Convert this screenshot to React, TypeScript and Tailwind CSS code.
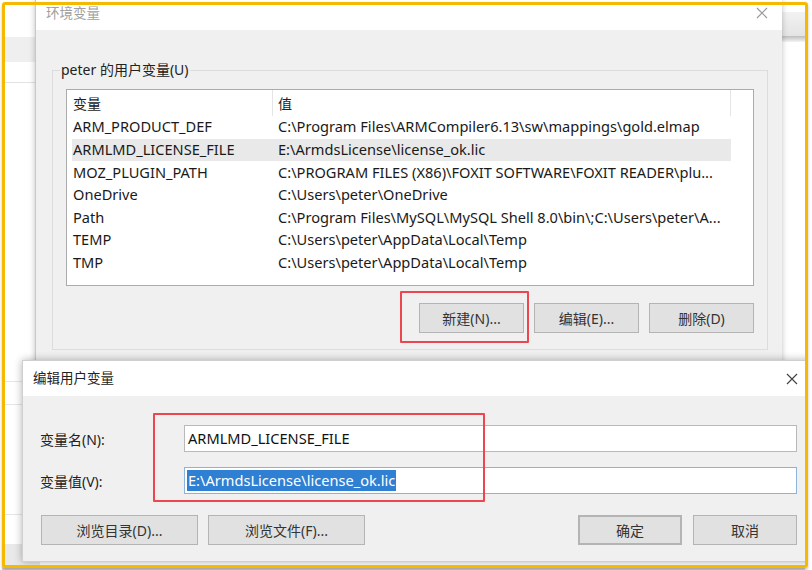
import React from "react";

const rows = [
  ["ARM_PRODUCT_DEF", "C:\\Program Files\\ARMCompiler6.13\\sw\\mappings\\gold.elmap"],
  ["ARMLMD_LICENSE_FILE", "E:\\ArmdsLicense\\license_ok.lic"],
  ["MOZ_PLUGIN_PATH", "C:\\PROGRAM FILES (X86)\\FOXIT SOFTWARE\\FOXIT READER\\plu..."],
  ["OneDrive", "C:\\Users\\peter\\OneDrive"],
  ["Path", "C:\\Program Files\\MySQL\\MySQL Shell 8.0\\bin\\;C:\\Users\\peter\\A..."],
  ["TEMP", "C:\\Users\\peter\\AppData\\Local\\Temp"],
  ["TMP", "C:\\Users\\peter\\AppData\\Local\\Temp"],
];

const font = { fontFamily: '"Noto Sans", "Noto Sans CJK SC", sans-serif' };

function CloseX({ color }: { color: string }) {
  return (
    <svg width="12" height="12" viewBox="0 0 12 12">
      <path d="M1 1L11 11M11 1L1 11" stroke={color} strokeWidth="1.2" fill="none" />
    </svg>
  );
}

function WinButton({ children, className = "" }: { children: React.ReactNode; className?: string }) {
  return (
    <div
      className={`h-[30px] flex items-center justify-center bg-[#e1e1e1] border border-[#b4b4b4] text-[14px] text-[#333] ${className}`}
    >
      {children}
    </div>
  );
}

function EnvWindow() {
  return (
    <div className="absolute left-[35px] top-0 w-[747px] h-[400px] bg-[#f0f0f0] border-l border-[#c8c8c8] shadow-[0_0_6px_rgba(0,0,0,0.25)] flex flex-col">
      <div className="h-[30px] bg-white flex items-center justify-between pl-[10px] pr-[14px] pb-[4px]">
        <span className="text-[13.5px] text-[#a0a0a0]">环境变量</span>
        <CloseX color="#9a9a9a" />
      </div>
      <div className="relative mt-[40px] ml-[16px] mr-[14px] h-[280px] border border-[#dcdcdc] pt-[18px] px-[13px]">
        <span className="absolute left-[7px] top-[-12px] bg-[#f0f0f0] px-[1px] text-[14px] text-[#222]">
          peter 的用户变量(U)
        </span>
        <div className="h-[197px] bg-white border border-[#ababab] flex flex-col">
          <div className="h-[26px] flex text-[14px] text-[#222] shrink-0">
            <div className="w-[206px] pl-[6px] flex items-center border-r border-[#e5e5e5]">变量</div>
            <div className="w-[458px] pl-[5px] flex items-center border-r border-[#e5e5e5]">值</div>
            <div className="flex-1" />
          </div>
          {rows.map(([name, value], i) => (
            <div
              key={name}
              className={`h-[22.6px] ml-[5px] w-[659px] flex items-center text-[14.6px] text-[#1a1a1a] whitespace-nowrap ${
                i === 1 ? "bg-[#e9e9e9]" : ""
              }`}
            >
              <div className="w-[206px] pl-[1px]">{name}</div>
              <div>{value}</div>
            </div>
          ))}
        </div>
        <div className="flex justify-end gap-[10px] mt-[17px]">
          <WinButton className="w-[105px]">新建(N)...</WinButton>
          <WinButton className="w-[105px]">编辑(E)...</WinButton>
          <WinButton className="w-[105px]">删除(D)</WinButton>
        </div>
      </div>
    </div>
  );
}

function EditWindow() {
  return (
    <div className="absolute left-[22px] top-[360px] w-[793px] h-[202px] bg-[#f0f0f0] border border-[#cfcfcf] shadow-[0_0_8px_rgba(0,0,0,0.3)] flex flex-col">
      <div className="h-[35px] bg-white flex items-center justify-between pl-[10px] pr-[16px] shrink-0">
        <span className="text-[13.5px] text-[#222]">编辑用户变量</span>
        <CloseX color="#444" />
      </div>
      <div className="flex flex-col pl-[17px] pr-[17px] pt-[29px]">
        <div className="flex items-center h-[27px]">
          <span className="w-[144px] text-[14px] text-[#222] pt-[2px]">变量名(N):</span>
          <div className="flex-1 h-[27px] bg-white border border-[#b9b9b9] flex items-center pl-[3px] text-[14.6px] text-[#111]">
            ARMLMD_LICENSE_FILE
          </div>
        </div>
        <div className="flex items-center h-[27px] mt-[15px]">
          <span className="w-[144px] text-[14px] text-[#222] pt-[2px]">变量值(V):</span>
          <div className="flex-1 h-[27px] bg-white border border-[#8db2dc] flex items-center pl-[2px] text-[14.6px]">
            <span className="bg-[#2f7fd3] text-white px-[1px] leading-[21px]">E:\ArmdsLicense\license_ok.lic</span>
          </div>
        </div>
        <div className="flex items-center mt-[21px]">
          <WinButton className="w-[157px] ml-[1px]">浏览目录(D)...</WinButton>
          <WinButton className="w-[157px] ml-[10px]">浏览文件(F)...</WinButton>
          <div className="flex-1" />
          <WinButton className="w-[104px] border-2 border-[#3c8fe0]">确定</WinButton>
          <WinButton className="w-[104px] ml-[11px]">取消</WinButton>
        </div>
      </div>
    </div>
  );
}

export default function App() {
  return (
    <div className="relative w-[812px] h-[570px] bg-white overflow-hidden" style={font}>
      {/* background desktop windows */}
      <div className="absolute left-0 top-0 w-[40px] h-[570px] bg-white">
        <div className="h-[37px]" />
        <div className="h-[25px] bg-[#efefef]" />
        <div className="h-[20px]" />
        <div className="h-px bg-[#e2e2e2]" />
        <div className="h-[298px]" />
        <div className="h-px bg-[#e6e6e6]" />
        <div className="h-[22px]" />
        <div className="h-px bg-[#e6e6e6]" />
        <div className="h-[109px]" />
        <div className="h-px bg-[#e6e6e6]" />
        <div className="h-[29px]" />
        <div className="h-[25px] bg-[#e9e9e9]" />
      </div>
      <div className="absolute left-[782px] top-0 w-[30px] h-[570px] bg-white">
        <div className="h-[12px]" />
        <div className="h-[24px] bg-gradient-to-b from-[#f2f2f2] to-[#e4e4e4]" />
        <div className="h-[6px] bg-gradient-to-b from-[#bdbdbd] to-[#f4f4f4]" />
      </div>

      <EnvWindow />
      <EditWindow />

      {/* annotation boxes */}
      <div className="absolute left-[400px] top-[291px] w-[129px] h-[52px] border-2 border-[#ec4750] rounded-[1px]" />
      <div className="absolute left-[153px] top-[413px] w-[332px] h-[89px] border-2 border-[#ec4750] rounded-[1px]" />

      {/* yellow frame */}
      <div className="absolute left-0 top-[565px] w-[812px] h-[5px] bg-[#d9d9d9]" />
      <div className="absolute left-[805px] top-0 w-[7px] h-[570px] bg-white" />
      <div className="absolute left-0 top-0 w-[2px] h-[570px] bg-white" />
      <div className="absolute left-[2px] top-[2px] w-[806px] h-[566px] border-[3px] border-[#f7b900] rounded-[3px] shadow-[0_2px_3px_rgba(0,0,0,0.25)]" />
    </div>
  );
}
